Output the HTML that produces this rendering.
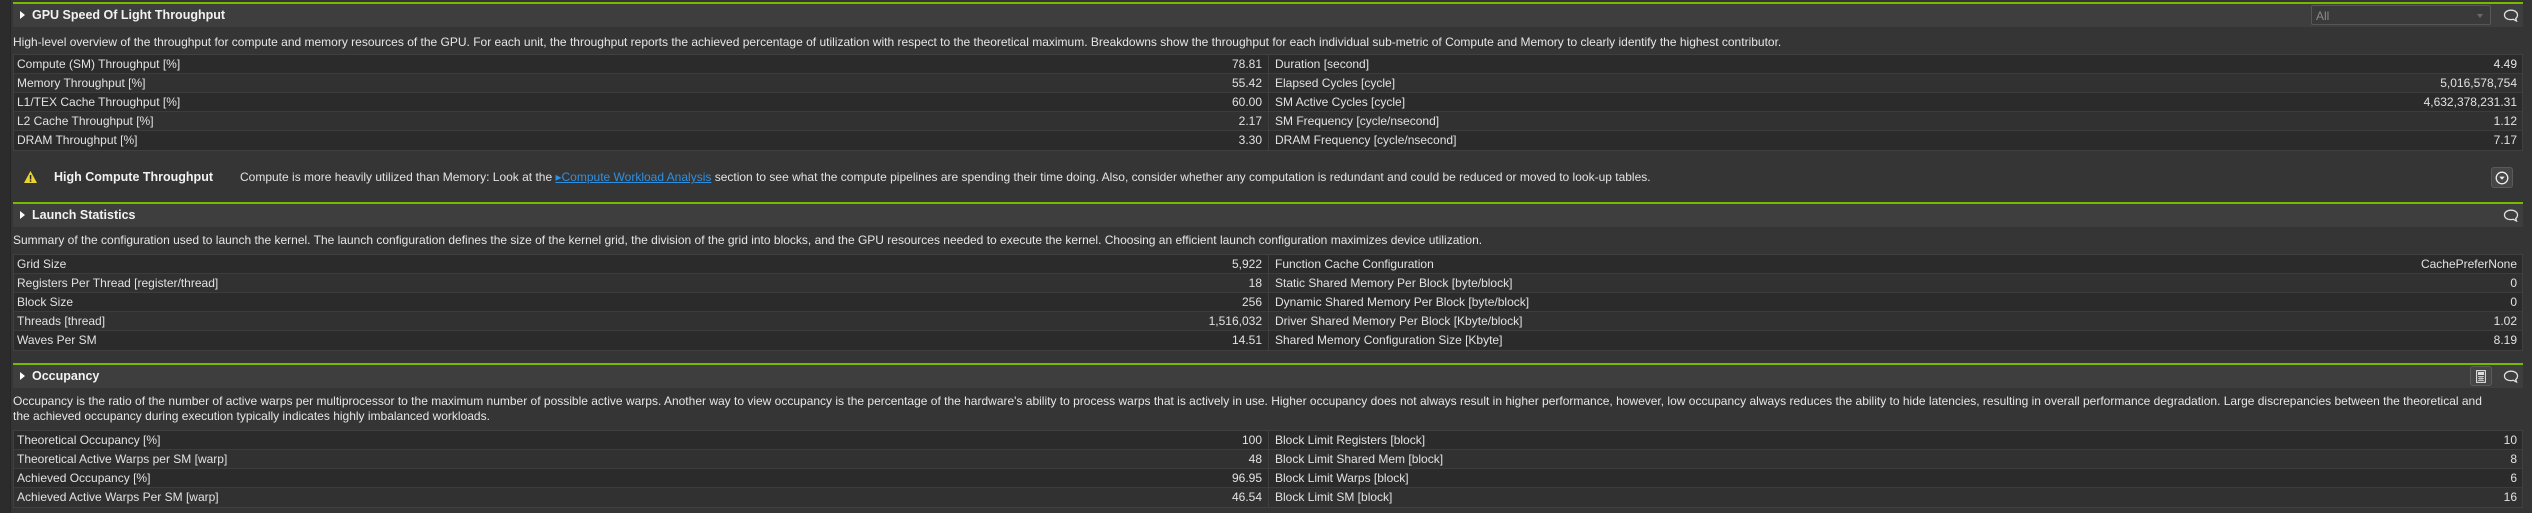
<!DOCTYPE html>
<html><head><meta charset="utf-8"><style>
*{margin:0;padding:0;box-sizing:border-box}
body{width:2532px;height:513px;background:#353535;font-family:"Liberation Sans",sans-serif;font-size:12px;color:#e2e2e2;position:relative;overflow:hidden}
.strip{position:absolute;left:0;top:0;width:11px;height:513px;background:#2c2c2c;border-right:1px solid #262626}
.abs{position:absolute}
.green{position:absolute;left:13px;width:2510px;height:2px;background:#76b900}
.hdr{position:absolute;left:13px;width:2510px;height:23px;background:#3e3e3e}
.hdr .tri{position:absolute;left:7px;top:7px;width:0;height:0;border-left:5px solid #fff;border-top:4.5px solid transparent;border-bottom:4.5px solid transparent}
.hdr .ttl{position:absolute;left:19px;top:4px;font-weight:bold;font-size:12.5px;color:#f2f2f2;white-space:nowrap}
.desc{position:absolute;left:13px;white-space:nowrap;line-height:15px;color:#e6e6e6}
.tbl{position:absolute;left:13px;width:2510px;border:1px solid #404040;background:#2b2b2b}
.row{height:19px;position:relative;border-bottom:1px solid #3c3c3c}
.row:last-child{border-bottom:none}
.row:nth-child(even){background:#313131}
.row span{position:absolute;top:2px;white-space:nowrap}
.l1{left:3px}.v1{right:1260px}.l2{left:1261px}.v2{right:5px}
.row .div{position:absolute;left:1254px;top:0;width:1px;height:19px;background:#3f3f3f}
.cm{position:absolute;width:16px;height:13px}
</style></head><body>
<div class="strip"></div>

<!-- Section 1 -->
<div class="green" style="top:2px"></div>
<div class="hdr" style="top:4px"><div class="tri"></div><div class="ttl">GPU Speed Of Light Throughput</div>
<div class="abs" style="left:2298px;top:1px;width:180px;height:20px;background:#3a3a3a;border:1px solid #575757;border-radius:2px"><span class="abs" style="left:4px;top:3px;color:#8a8a8a">All</span><span class="abs" style="right:7px;top:8px;border-top:4px solid #6a6a6a;border-left:3.5px solid transparent;border-right:3.5px solid transparent"></span></div>
<svg class="cm" style="left:2490px;top:5px" viewBox="0 0 16 13"><path d="M8 1.2C4.2 1.2 1.5 3.2 1.5 6s2.7 4.6 6.5 4.6c.8 0 1.5-.1 2.2-.3L13.5 12l-.8-2.6C14 8.6 14.5 7.4 14.5 6c0-2.8-2.7-4.8-6.5-4.8z" fill="none" stroke="#e0e0e0" stroke-width="1.3"/></svg>
</div>
<div class="desc" style="top:35px;left:13px">High-level overview of the throughput for compute and memory resources of the GPU. For each unit, the throughput reports the achieved percentage of utilization with respect to the theoretical maximum. Breakdowns show the throughput for each individual sub-metric of Compute and Memory to clearly identify the highest contributor.</div>
<div class="tbl" style="top:54px">
<div class="row"><div class="div"></div><span class="l1">Compute (SM) Throughput [%]</span><span class="v1">78.81</span><span class="l2">Duration [second]</span><span class="v2">4.49</span></div>
<div class="row"><div class="div"></div><span class="l1">Memory Throughput [%]</span><span class="v1">55.42</span><span class="l2">Elapsed Cycles [cycle]</span><span class="v2">5,016,578,754</span></div>
<div class="row"><div class="div"></div><span class="l1">L1/TEX Cache Throughput [%]</span><span class="v1">60.00</span><span class="l2">SM Active Cycles [cycle]</span><span class="v2">4,632,378,231.31</span></div>
<div class="row"><div class="div"></div><span class="l1">L2 Cache Throughput [%]</span><span class="v1">2.17</span><span class="l2">SM Frequency [cycle/nsecond]</span><span class="v2">1.12</span></div>
<div class="row"><div class="div"></div><span class="l1">DRAM Throughput [%]</span><span class="v1">3.30</span><span class="l2">DRAM Frequency [cycle/nsecond]</span><span class="v2">7.17</span></div>
</div>
<svg class="abs" style="left:23px;top:170px" width="15" height="14" viewBox="0 0 15 14"><path d="M7.5 1L14 13H1z" fill="#e8d531"/><rect x="6.8" y="5" width="1.5" height="4.5" fill="#222"/><rect x="6.8" y="10.3" width="1.5" height="1.5" fill="#222"/></svg>
<div class="abs" style="left:54px;top:170px;font-weight:bold;font-size:12.5px;color:#f2f2f2;white-space:nowrap">High Compute Throughput</div>
<div class="abs" style="left:240px;top:170px;white-space:nowrap">Compute is more heavily utilized than Memory: Look at the <span style="color:#2f8fe0;text-decoration:underline">&#9656;Compute Workload Analysis</span> section to see what the compute pipelines are spending their time doing. Also, consider whether any computation is redundant and could be reduced or moved to look-up tables.</div>
<div class="abs" style="left:2491px;top:167px;width:22px;height:21px;background:#464646;border:1px solid #5a5a5a;border-radius:3px"><svg class="abs" style="left:3px;top:3px" width="14" height="14" viewBox="0 0 14 14"><circle cx="7" cy="7" r="5.8" fill="none" stroke="#eee" stroke-width="1.3"/><path d="M4.3 5.6h5.4L7 8.8z" fill="#eee"/></svg></div>

<!-- Section 2 -->
<div class="green" style="top:202px"></div>
<div class="hdr" style="top:204px"><div class="tri"></div><div class="ttl">Launch Statistics</div>
<svg class="cm" style="left:2490px;top:5px" viewBox="0 0 16 13"><path d="M8 1.2C4.2 1.2 1.5 3.2 1.5 6s2.7 4.6 6.5 4.6c.8 0 1.5-.1 2.2-.3L13.5 12l-.8-2.6C14 8.6 14.5 7.4 14.5 6c0-2.8-2.7-4.8-6.5-4.8z" fill="none" stroke="#e0e0e0" stroke-width="1.3"/></svg>
</div>
<div class="desc" style="top:233px">Summary of the configuration used to launch the kernel. The launch configuration defines the size of the kernel grid, the division of the grid into blocks, and the GPU resources needed to execute the kernel. Choosing an efficient launch configuration maximizes device utilization.</div>
<div class="tbl" style="top:254px">
<div class="row"><div class="div"></div><span class="l1">Grid Size</span><span class="v1">5,922</span><span class="l2">Function Cache Configuration</span><span class="v2">CachePreferNone</span></div>
<div class="row"><div class="div"></div><span class="l1">Registers Per Thread [register/thread]</span><span class="v1">18</span><span class="l2">Static Shared Memory Per Block [byte/block]</span><span class="v2">0</span></div>
<div class="row"><div class="div"></div><span class="l1">Block Size</span><span class="v1">256</span><span class="l2">Dynamic Shared Memory Per Block [byte/block]</span><span class="v2">0</span></div>
<div class="row"><div class="div"></div><span class="l1">Threads [thread]</span><span class="v1">1,516,032</span><span class="l2">Driver Shared Memory Per Block [Kbyte/block]</span><span class="v2">1.02</span></div>
<div class="row"><div class="div"></div><span class="l1">Waves Per SM</span><span class="v1">14.51</span><span class="l2">Shared Memory Configuration Size [Kbyte]</span><span class="v2">8.19</span></div>
</div>

<!-- Section 3 -->
<div class="green" style="top:363px"></div>
<div class="hdr" style="top:365px"><div class="tri"></div><div class="ttl">Occupancy</div>
<div class="abs" style="left:2457px;top:1px;width:22px;height:20px;background:#464646;border:1px solid #5a5a5a;border-radius:3px"><svg class="abs" style="left:5px;top:3px" width="10" height="13" viewBox="0 0 10 13"><rect x=".6" y=".6" width="8.8" height="11.8" fill="none" stroke="#ddd" stroke-width="1.1"/><rect x="2" y="2" width="6" height="3" fill="#ddd"/><path d="M2 6.5h6M2 8.5h6M2 10.5h6M4 6v5M6 6v5" stroke="#ddd" stroke-width=".8"/></svg></div>
<svg class="cm" style="left:2490px;top:5px" viewBox="0 0 16 13"><path d="M8 1.2C4.2 1.2 1.5 3.2 1.5 6s2.7 4.6 6.5 4.6c.8 0 1.5-.1 2.2-.3L13.5 12l-.8-2.6C14 8.6 14.5 7.4 14.5 6c0-2.8-2.7-4.8-6.5-4.8z" fill="none" stroke="#e0e0e0" stroke-width="1.3"/></svg>
</div>
<div class="desc" style="top:394px">Occupancy is the ratio of the number of active warps per multiprocessor to the maximum number of possible active warps. Another way to view occupancy is the percentage of the hardware's ability to process warps that is actively in use. Higher occupancy does not always result in higher performance, however, low occupancy always reduces the ability to hide latencies, resulting in overall performance degradation. Large discrepancies between the theoretical and<br>the achieved occupancy during execution typically indicates highly imbalanced workloads.</div>
<div class="tbl" style="top:430px">
<div class="row"><div class="div"></div><span class="l1">Theoretical Occupancy [%]</span><span class="v1">100</span><span class="l2">Block Limit Registers [block]</span><span class="v2">10</span></div>
<div class="row"><div class="div"></div><span class="l1">Theoretical Active Warps per SM [warp]</span><span class="v1">48</span><span class="l2">Block Limit Shared Mem [block]</span><span class="v2">8</span></div>
<div class="row"><div class="div"></div><span class="l1">Achieved Occupancy [%]</span><span class="v1">96.95</span><span class="l2">Block Limit Warps [block]</span><span class="v2">6</span></div>
<div class="row"><div class="div"></div><span class="l1">Achieved Active Warps Per SM [warp]</span><span class="v1">46.54</span><span class="l2">Block Limit SM [block]</span><span class="v2">16</span></div>
</div>
</body></html>
